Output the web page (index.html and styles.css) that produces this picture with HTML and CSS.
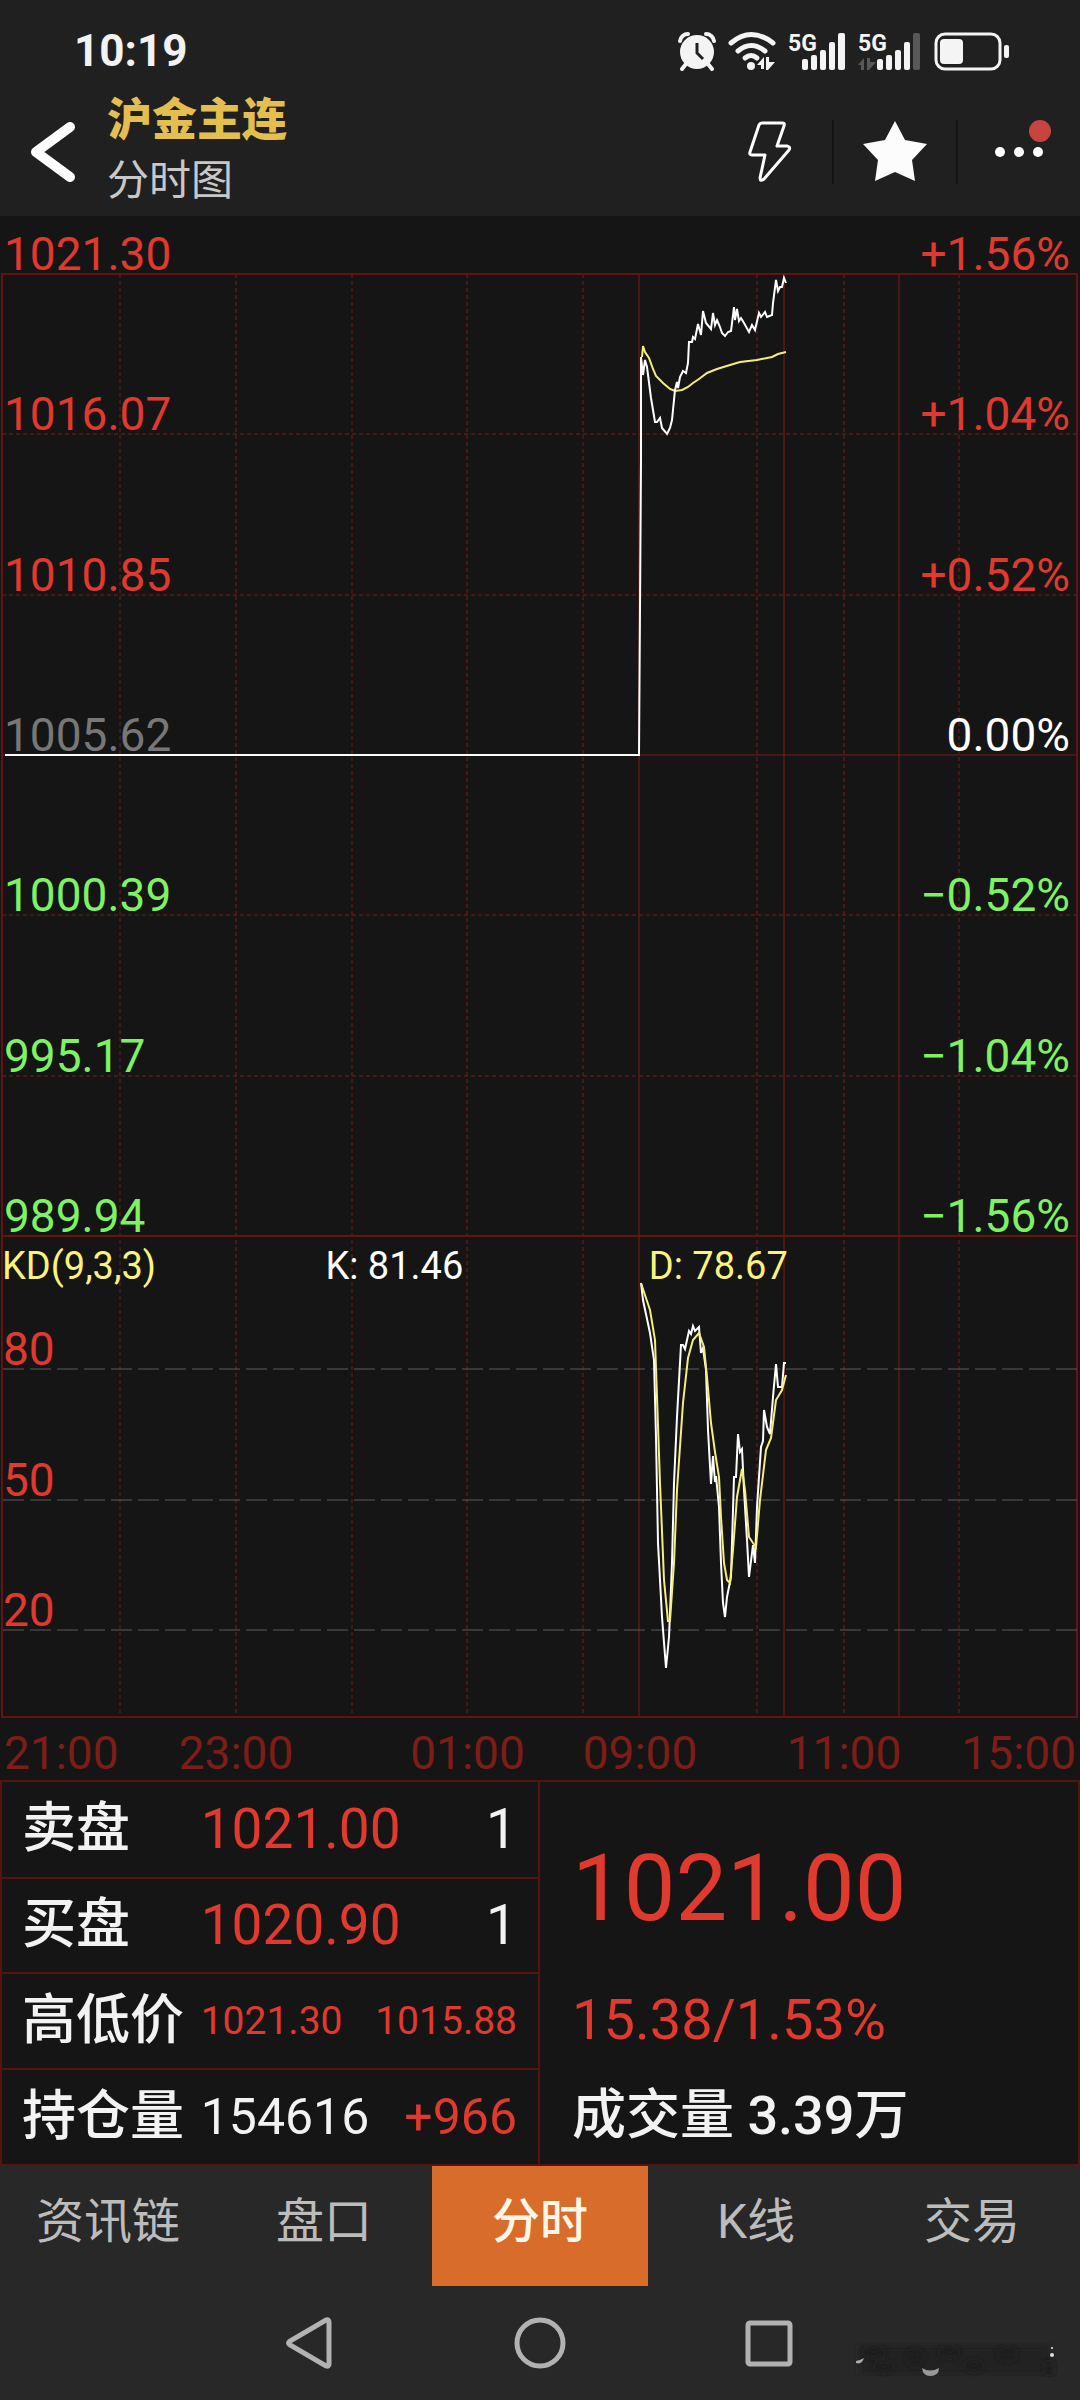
FILE: index.html
```
<!DOCTYPE html>
<html lang="zh-CN">
<head>
  <meta charset="UTF-8" />
  <meta name="viewport" content="width=device-width, initial-scale=1.0"/>
  <title>沪金主连 分时图</title>
  <link rel="stylesheet" href="styles.css">
</head>
<body>

  <div class="status-bar">
    <span class="clock">10:19</span>
    <div class="status-icons">
      <!-- alarm -->
      <svg width="38" height="40" viewBox="0 0 38 40">
        <g fill="none" stroke="#f4f4f4" stroke-linecap="round">
          <path d="M2 10A8 8 0 0 1 10 3M36 10A8 8 0 0 0 28 3" stroke-width="4"/>
          <path d="M8 33L4 38M30 33L34 38" stroke-width="4"/>
        </g>
        <circle cx="19" cy="21" r="17" fill="#f4f4f4"/>
        <path d="M19 12V22L25 28" fill="none" stroke="#202020" stroke-width="3"/>
      </svg>
      <!-- wifi -->
      <svg width="48" height="40" viewBox="0 0 48 40">
        <g fill="none" stroke="#f4f4f4" stroke-width="5" stroke-linecap="round">
          <path d="M3 12Q23 -5 45 12"/>
          <path d="M10 20Q23 9 37 20"/>
          <path d="M17 27Q23 22 29 27"/>
        </g>
        <circle cx="23" cy="35" r="4" fill="#f4f4f4"/>
        <path d="M29 34L36 26V38H33V34ZM38 26H41V31H47L40 39H38Z" fill="#f4f4f4"/>
      </svg>
      <!-- sim 1 -->
      <svg width="58" height="40" viewBox="0 0 58 40">
        <text x="0" y="20" class="net">5G</text>
        <g fill="#f4f4f4">
          <rect x="14" y="28" width="6" height="11" rx="2"/>
          <rect x="23" y="24" width="6" height="15" rx="2"/>
          <rect x="32" y="19" width="6" height="20" rx="2"/>
          <rect x="41" y="11" width="6" height="28" rx="2"/>
          <rect x="50" y="2" width="7" height="37" rx="2"/>
        </g>
      </svg>
      <!-- sim 2 -->
      <svg width="64" height="40" viewBox="0 0 64 40">
        <text x="0" y="20" class="net">5G</text>
        <path d="M0 34L6 27V39H3V34ZM9 27H12V31H18L11 39H9Z" fill="#585858"/>
        <g fill="#f4f4f4">
          <rect x="19" y="28" width="6" height="11" rx="2"/>
          <rect x="28" y="24" width="6" height="15" rx="2"/>
          <rect x="37" y="19" width="6" height="20" rx="2"/>
          <rect x="46" y="11" width="6" height="28" rx="2"/>
        </g>
        <rect x="55" y="2" width="7" height="37" rx="2" fill="#585858"/>
      </svg>
      <!-- battery -->
      <svg width="76" height="40" viewBox="0 0 76 40">
        <rect x="2" y="3" width="64" height="35" rx="9" fill="none" stroke="#f4f4f4" stroke-width="3"/>
        <rect x="6" y="8" width="23" height="25" rx="4" fill="#f4f4f4"/>
        <rect x="70" y="14" width="5" height="13" rx="2" fill="#f4f4f4"/>
      </svg>
    </div>
  </div>

  <header>
    <button class="back" aria-label="返回">
      <svg width="50" height="66" viewBox="0 0 50 66">
        <path d="M42 8L8 33L42 58" fill="none" stroke="#fff" stroke-width="10" stroke-linecap="round" stroke-linejoin="round"/>
      </svg>
    </button>
    <div class="title">
      <h1>沪金主连</h1>
      <p>分时图</p>
    </div>
    <button class="action" aria-label="闪电下单">
      <svg width="44" height="64" viewBox="0 0 44 64">
        <path d="M14 3H35Q37 3 36 6L29 26H39Q43 27 41 30L16 59Q12 62 12 58L17 35H4Q1 35 2 32L11 5Q12 3 14 3Z" fill="none" stroke="#fff" stroke-width="3" stroke-linejoin="round"/>
      </svg>
    </button>
    <button class="action" aria-label="自选">
      <svg width="64" height="62" viewBox="0 0 64 62">
        <path d="M32 1L42 20L64 24L49 40L52 61L32 52L12 61L15 40L0 24L22 20Z" fill="#fcfcfc"/>
      </svg>
    </button>
    <button class="action" aria-label="更多">
      <svg width="70" height="64" viewBox="0 0 70 64">
        <g fill="#fff">
          <circle cx="16" cy="32" r="5"/>
          <circle cx="35" cy="32" r="5"/>
          <circle cx="54" cy="32" r="5"/>
        </g>
        <circle cx="56" cy="11" r="11" fill="#c8453f"/>
      </svg>
    </button>
  </header>

  <main>
    <section class="chart">
      <svg class="plot" viewBox="0 0 1080 1502" preserveAspectRatio="none">
        <!-- grid -->
        <g class="dash">
          <path d="M2 218H1077M2 379H1077M2 699H1077M2 860H1077"/>
          <path d="M120 58V1502M236 58V1502M352 58V1502M467 58V1502M583 58V1502M757 58V1502M844 58V1502M959 58V1502"/>
        </g>
        <path class="line" d="M639 58V1502M784 58V1502M899 58V1502M2 539H1077"/>
        <path class="frame" d="M2 58H1077V1501H2ZM2 1020H1077"/>
        <path class="level" d="M3 1153H1077M3 1284H1077M3 1414H1077"/>
        <!-- price and average -->
        <polyline class="avg" points="642,141 643,130 645,136 649,142 653,153 656,160 663,167 670,173 675,175 682,174 688,171 693,167 699,163 707,157 717,153 730,149 740,146 757,144 772,141 778,138 786,136"/>
        <polyline class="price" points="5,539 639,539 641,244 641,141 643,159 645,144 647,151 651,182 655,206 657,206 660,202 662,212 667,218 670,212 672,204 675,174 677,166 678,172 680,161 683,155 686,157 688,147 689,126 692,126 693,121 695,123 698,108 701,119 703,95 706,107 711,113 713,97 715,109 717,104 720,111 722,117 725,120 728,116 731,115 734,91 735,104 737,93 739,105 741,102 744,107 749,116 752,109 755,114 759,97 761,101 765,96 767,101 772,99 773,87 776,64 778,75 780,71 782,71 784,62 786,67"/>
        <!-- K and D -->
        <polyline class="price" points="641,1067 643,1084 650,1117 654,1144 656,1221 658,1327 662,1401 666,1452 669,1421 672,1347 674,1267 677,1201 681,1129 683,1129 685,1133 689,1115 691,1118 693,1110 695,1115 699,1111 701,1137 703,1132 706,1154 708,1214 711,1268 713,1240 715,1266 716,1260 719,1291 721,1347 723,1387 725,1401 727,1381 731,1361 734,1261 736,1261 738,1218 740,1236 742,1233 744,1274 747,1324 749,1361 753,1329 755,1347 757,1291 761,1231 763,1225 764,1194 767,1211 770,1218 773,1181 776,1148 778,1171 782,1171 784,1147 786,1147"/>
        <polyline class="avg" points="641,1067 650,1094 655,1124 657,1181 660,1267 664,1364 668,1405 670,1405 674,1347 677,1274 683,1187 688,1142 693,1124 699,1117 704,1131 707,1161 711,1207 715,1236 719,1261 721,1301 724,1347 727,1364 730,1367 733,1334 737,1281 742,1253 745,1274 749,1321 753,1327 756,1331 760,1284 766,1234 771,1222 776,1184 782,1174 786,1159"/>
      </svg>

      <div class="scale">
        <div class="tick up"><span>1021.30</span><span>+1.56%</span></div>
        <div class="tick up"><span>1016.07</span><span>+1.04%</span></div>
        <div class="tick up"><span>1010.85</span><span>+0.52%</span></div>
        <div class="tick flat"><span>1005.62</span><span>0.00%</span></div>
        <div class="tick down"><span>1000.39</span><span>−0.52%</span></div>
        <div class="tick down"><span>995.17</span><span>−1.04%</span></div>
        <div class="tick down"><span>989.94</span><span>−1.56%</span></div>
        <div class="kd-head">
          <span class="yellow">KD(9,3,3)</span>
          <span>K: 81.46</span>
          <span class="yellow">D: 78.67</span>
        </div>
        <div class="kd-tick up">80</div>
        <div class="kd-tick up">50</div>
        <div class="kd-tick up">20</div>
      </div>
    </section>

    <div class="times">
      <span>21:00</span>
      <span>23:00</span>
      <span>01:00</span>
      <span>09:00</span>
      <span>11:00</span>
      <span>15:00</span>
    </div>

    <section class="quote">
      <table>
        <tr><th>卖盘</th><td class="up">1021.00</td><td>1</td></tr>
        <tr><th>买盘</th><td class="up">1020.90</td><td>1</td></tr>
        <tr class="small"><th>高低价</th><td class="up">1021.30</td><td class="up">1015.88</td></tr>
        <tr class="medium"><th>持仓量</th><td>154616</td><td class="up">+966</td></tr>
      </table>
      <div class="last">
        <p class="last-price up">1021.00</p>
        <p class="change up">15.38/1.53%</p>
        <p class="volume">成交量 3.39万</p>
      </div>
    </section>
  </main>

  <nav class="tabs">
    <a href="#">资讯链</a>
    <a href="#">盘口</a>
    <a href="#" class="active">分时</a>
    <a href="#">K线</a>
    <a href="#">交易</a>
  </nav>

  <div class="system-nav">
    <button aria-label="后退">
      <svg width="60" height="60" viewBox="0 0 60 60">
        <path d="M46 7Q49 6 49 9V51Q49 54 46 53L10 32Q7 30 10 28Z"/>
      </svg>
    </button>
    <button aria-label="主页">
      <svg width="60" height="60" viewBox="0 0 60 60"><circle cx="30" cy="30" r="23"/></svg>
    </button>
    <button aria-label="最近任务">
      <svg width="60" height="60" viewBox="0 0 60 60"><rect x="8" y="10" width="42" height="41" rx="2"/></svg>
    </button>
    <svg class="smudge" width="204" height="40" viewBox="0 0 204 40">
      <defs>
        <filter id="soft"><feGaussianBlur stdDeviation="3"/></filter>
      </defs>
      <rect x="6" y="5" width="190" height="29" fill="#242424" filter="url(#soft)"/>
      <g fill="#1c1c1c" filter="url(#soft)">
        <ellipse cx="20" cy="12" rx="11" ry="5"/>
        <ellipse cx="30" cy="27" rx="9" ry="5"/>
        <ellipse cx="61" cy="18" rx="8" ry="8"/>
        <ellipse cx="95" cy="12" rx="10" ry="5"/>
        <ellipse cx="120" cy="26" rx="9" ry="5"/>
        <ellipse cx="153" cy="14" rx="9" ry="7"/>
        <rect x="191" y="22" width="8" height="12"/>
      </g>
      <path d="M2 21Q7 20 10 18Q8 25 2 23Z" fill="#aaa"/>
      <path d="M68 28Q76 33 85 28Q85 36 76 36Q69 36 68 28Z" fill="#999"/>
      <circle cx="198" cy="8" r="1" fill="#eee"/>
      <circle cx="198" cy="15" r="2" fill="#ddd"/>
    </svg>
  </div>

</body>
</html>
```
FILE: styles.css
```
* {
  box-sizing: border-box;
}

body {
  font-family: Roboto, 'Noto Sans CJK SC', sans-serif;
  margin: 0;
  min-height: 100vh;
  display: flex;
  flex-direction: column;
  background: #282828;
  color: #f2f2f2;
}

h1, p {
  margin: 0;
}

button {
  background: none;
  border: none;
  padding: 0;
  cursor: pointer;
}

svg {
  display: block;
}

.up {
  color: #e0392e;
}

.down {
  color: #7ef263;
}

.yellow {
  color: #fbf37c;
}

/* status bar */
.status-bar {
  height: 88px;
  padding: 14px 70px 0 74px;
  display: flex;
  justify-content: space-between;
  align-items: center;
  background: #202020;
}

.clock {
  font-size: 44px;
  line-height: 60px;
  font-weight: bold;
}

.status-icons {
  display: flex;
  gap: 12px;
}

.net {
  font-size: 23px;
  font-weight: bold;
  fill: #f4f4f4;
}

/* title bar */
header {
  height: 128px;
  display: flex;
  align-items: center;
  background: #202020;
}

.back {
  width: 107px;
  padding-left: 28px;
}

.title {
  flex: 1;
  padding-bottom: 6px;
}

.title h1 {
  font-size: 45px;
  line-height: 64px;
  font-weight: 900;
  color: #e3bf50;
}

.title p {
  font-size: 42px;
  line-height: 56px;
  color: #c8c8c8;
}

.action {
  width: 124px;
  height: 64px;
  display: flex;
  justify-content: center;
}

.action + .action {
  border-left: 2px solid #141414;
}

/* chart */
main {
  background: #151515;
}

.chart {
  display: grid;
}

.plot,
.scale {
  grid-area: 1 / 1;
  width: 100%;
}

.plot {
  height: 1502px;
}

.plot path,
.plot polyline {
  fill: none;
  vector-effect: non-scaling-stroke;
}

.dash {
  stroke: #74201b;
  stroke-width: 1;
  stroke-dasharray: 4 3;
}

.line {
  stroke: #841a12;
  stroke-width: 1;
}

.frame {
  stroke: #64130e;
  stroke-width: 2;
}

.level {
  stroke: #5c5c5c;
  stroke-width: 1;
  stroke-dasharray: 21 6;
}

.price {
  stroke: #fff;
  stroke-width: 2;
}

.avg {
  stroke: #f6ee7a;
  stroke-width: 2;
}

.scale {
  display: grid;
  grid-template-rows: 58px 160px 161px 160px 160px 161px 160px 60px 73px 131px 130px;
  align-items: end;
  font-size: 46px;
  line-height: 40px;
}

.tick {
  display: flex;
  justify-content: space-between;
  padding: 0 10px 0 4px;
}

.flat {
  color: #fff;
}

.flat span:first-child {
  color: #777;
}

.kd-head {
  align-self: center;
  display: grid;
  grid-template-columns: 30% 30% 1fr;
  padding-left: 2px;
  font-size: 38px;
  line-height: 42px;
  color: #fff;
}

.kd-tick {
  padding-left: 3px;
}

/* label centres follow the grid lines of the plot */
.times {
  display: grid;
  grid-template-columns: 120fr 232fr 231fr 114fr 294fr 89fr;
  justify-items: center;
  height: 62px;
  font-size: 46px;
  line-height: 70px;
  color: #7d1d17;
}

.times span {
  min-width: 0;
}

.times span:first-child {
  justify-self: start;
  padding-left: 4px;
}

.times span:last-child {
  justify-self: end;
  padding-right: 4px;
}

/* quote panel */
.quote {
  display: grid;
  grid-template-columns: minmax(0, 1fr) minmax(0, 1fr);
  border: 2px solid #5a120e;
  font-size: 54px;
}

table {
  width: 100%;
  table-layout: fixed;
  border-collapse: collapse;
  border-right: 2px solid #5a120e;
}

tr + tr {
  border-top: 2px solid #5a120e;
}

th,
td {
  height: 95px;
  padding: 0;
  line-height: 80px;
  white-space: nowrap;
  text-align: left;
  font-weight: normal;
}

th {
  width: 37%;
  padding-left: 20px;
  font-weight: 500;
}

td {
  font-size: 55px;
}

td:last-child {
  width: 32%;
  padding-right: 21px;
  text-align: right;
}

.small td {
  font-size: 39px;
}

.medium td {
  font-size: 50px;
}

.last {
  padding: 24px 0 0 32px;
  line-height: 96px;
}

.last-price {
  font-size: 92px;
  line-height: 166px;
}

.change {
  font-size: 56px;
}

.volume {
  font-weight: 500;
}

/* bottom tabs */
.tabs {
  display: grid;
  grid-template-columns: repeat(5, 1fr);
}

.tabs a {
  height: 120px;
  font-size: 48px;
  line-height: 112px;
  text-align: center;
  text-decoration: none;
  color: #bcbcbc;
}

.tabs .active {
  background: #d86c2a;
  color: #fff6e8;
  font-weight: 500;
}

.system-nav {
  position: relative;
  height: 114px;
  display: flex;
  justify-content: center;
  align-items: center;
  gap: 170px;
}

.system-nav button svg {
  fill: none;
  stroke: #b2b2b2;
  stroke-width: 5;
}

/* lies over the bar's right corner */
.smudge {
  position: absolute;
  right: 22px;
  bottom: 20px;
}
```
